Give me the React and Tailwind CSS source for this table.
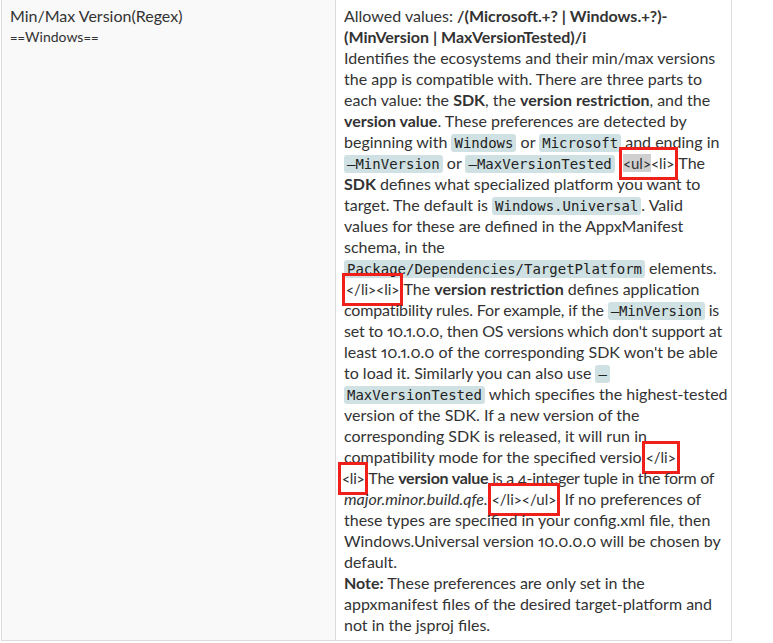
import React from 'react';

const Code = ({ children }) => (
  <code className="rounded-[3px] bg-[#d0e1e3] px-[3px] py-[1px] font-['DejaVu_Sans_Mono',monospace] text-[14px] leading-none text-[#222]">
    {children}
  </code>
);

const Tag = ({ children, className = '' }) => (
  <span className={`border-[3px] border-[#f01f1a] px-[1px] pt-[4px] pb-[5px] text-[15px] leading-none ${className}`}>
    {children}
  </span>
);

const lines = [
  <>Allowed values: <b>/(Microsoft.+? | Windows.+?)-</b></>,
  <b>(MinVersion | MaxVersionTested)/i</b>,
  <>Identifies the ecosystems and their min/max versions</>,
  <>the app is compatible with. There are three parts to</>,
  <>each value: the <b>SDK</b>, the <b>version restriction</b>, and the</>,
  <><b>version value</b>. These preferences are detected by</>,
  <>beginning with <Code>Windows</Code> or <Code>Microsoft</Code> and ending in</>,
  <>
    <Code>–MinVersion</Code> or <Code>–MaxVersionTested</Code>{' '}
    <Tag>
      <span className="bg-[#cfcfcf]">&lt;ul&gt;</span>&lt;li&gt;
    </Tag>
    The
  </>,
  <><b>SDK</b> defines what specialized platform you want to</>,
  <>target. The default is <Code>Windows.Universal</Code>. Valid</>,
  <>values for these are defined in the AppxManifest</>,
  <>schema, in the</>,
  <><Code>Package/Dependencies/TargetPlatform</Code> elements.</>,
  <><Tag className="-ml-[2px]">&lt;/li&gt;&lt;li&gt;</Tag>The <b>version restriction</b> defines application</>,
  <span className="tracking-[-0.15px]">compatibility rules. For example, if the <Code>–MinVersion</Code> is</span>,
  <span className="tracking-[-0.15px]">set to 10.1.0.0, then OS versions which don't support at</span>,
  <>least 10.1.0.0 of the corresponding SDK won't be able</>,
  <>to load it. Similarly you can also use <Code>–</Code></>,
  <><Code>MaxVersionTested</Code> which specifies the highest-tested</>,
  <>version of the SDK. If a new version of the</>,
  <>corresponding SDK is released, it will run in</>,
  <>compatibility mode for the specified versio<Tag>&lt;/li&gt;</Tag></>,
  <span className="tracking-[-0.25px]"><Tag className="-ml-[6px]">&lt;li&gt;</Tag>The <b>version value</b> is a 4-integer tuple in the form of</span>,
  <><i>major.minor.build.qfe.</i><Tag>&lt;/li&gt;&lt;/ul&gt;</Tag> If no preferences of</>,
  <>these types are specified in your config.xml file, then</>,
  <>Windows.Universal version 10.0.0.0 will be chosen by</>,
  <>default.</>,
  <><b>Note:</b> These preferences are only set in the</>,
  <>appxmanifest files of the desired target-platform and</>,
  <>not in the jsproj files.</>,
];

export default function App() {
  return (
    <div className="min-h-screen bg-white font-['Lato',sans-serif] text-[16px] leading-[21px] text-[#333] oldstyle-nums proportional-nums">
      <div className="ml-px flex w-[731px] border-b border-l border-r border-[#dcdcdc]">
        <div className="w-[334px] shrink-0 border-r border-[#dcdcdc] bg-[#f9f9f9] px-2 py-[5px]">
          <div>Min/Max Version(Regex)</div>
          <div className="text-[14px]">==Windows==</div>
        </div>
        <div className="flex-1 px-2 py-[5px]">
          {lines.map((line, i) => (
            <div key={i} className="h-[21px] whitespace-nowrap">
              {line}
            </div>
          ))}
        </div>
      </div>
    </div>
  );
}
